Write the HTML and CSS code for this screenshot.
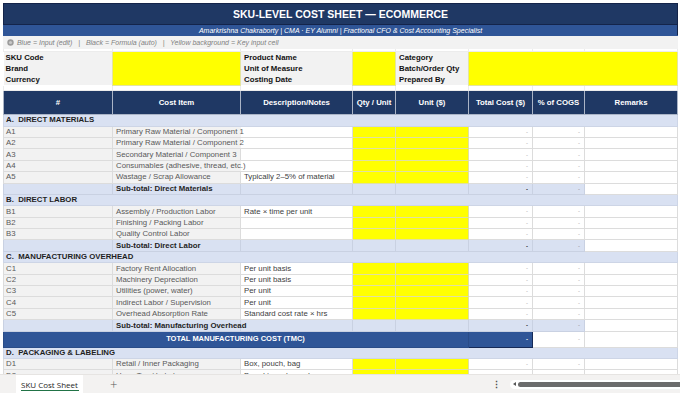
FILE: index.html
```html
<!DOCTYPE html>
<html>
    <head>
        <meta charset="UTF-8">
        <title>SKU Cost Sheet</title>
        <meta name="viewport" content="width=device-width, initial-scale=1.0">
        <link rel="stylesheet" href="styles.css">
    </head>
    <body>
        <main class="sheet">
            <table class="grid">
                <colgroup>
                    <col class="c-num">
                    <col class="c-item">
                    <col class="c-desc">
                    <col class="c-qty">
                    <col class="c-unit">
                    <col class="c-total">
                    <col class="c-pct">
                    <col class="c-rem">
                </colgroup>
                <tr class="title"><td colspan="8">SKU-LEVEL COST SHEET — ECOMMERCE</td></tr>
                <tr class="subtitle"><td colspan="8">Amarkrishna Chakraborty | CMA · EY Alumni | Fractional CFO &amp; Cost Accounting Specialist</td></tr>
                <tr class="legend">
                    <td colspan="8">
                        <svg class="dot" width="7" height="7" viewBox="0 0 7 7"><circle cx="3.5" cy="3.5" r="3.2" fill="#9b9b9b"/><circle cx="3.5" cy="3.5" r="1.6" fill="#c8c8c8"/></svg>
                        Blue = Input (edit) &nbsp; | &nbsp; Black = Formula (auto) &nbsp; | &nbsp; Yellow background = Key input cell
                    </td>
                </tr>
                <tr class="gap small"><td></td><td></td><td></td><td></td><td></td><td></td><td></td><td></td></tr>
                <tr class="info">
                    <td class="label">SKU Code</td>
                    <td class="key" rowspan="3"></td>
                    <td class="label">Product Name</td>
                    <td class="key" rowspan="3"></td>
                    <td class="label">Category</td>
                    <td class="key" rowspan="3" colspan="3"></td>
                </tr>
                <tr class="info">
                    <td class="label">Brand</td>
                    <td class="label">Unit of Measure</td>
                    <td class="label">Batch/Order Qty</td>
                </tr>
                <tr class="info">
                    <td class="label">Currency</td>
                    <td class="label">Costing Date</td>
                    <td class="label">Prepared By</td>
                </tr>
                <tr class="gap"><td></td><td></td><td></td><td></td><td></td><td></td><td></td><td></td></tr>
                <tr class="head">
                    <td>#</td>
                    <td>Cost Item</td>
                    <td>Description/Notes</td>
                    <td>Qty / Unit</td>
                    <td>Unit ($)</td>
                    <td>Total Cost ($)</td>
                    <td>% of COGS</td>
                    <td>Remarks</td>
                </tr>

                <tr class="section"><td colspan="8">A.&nbsp; DIRECT MATERIALS</td></tr>
                <tr class="row"><td class="code">A1</td><td class="item spill">Primary Raw Material / Component 1</td><td class="desc"></td><td class="key"></td><td class="key"></td><td class="num">-</td><td class="num">-</td><td></td></tr>
                <tr class="row"><td class="code">A2</td><td class="item spill">Primary Raw Material / Component 2</td><td class="desc"></td><td class="key"></td><td class="key"></td><td class="num">-</td><td class="num">-</td><td></td></tr>
                <tr class="row"><td class="code">A3</td><td class="item">Secondary Material / Component 3</td><td class="desc"></td><td class="key"></td><td class="key"></td><td class="num">-</td><td class="num">-</td><td></td></tr>
                <tr class="row"><td class="code">A4</td><td class="item spill">Consumables (adhesive, thread, etc.)</td><td class="desc"></td><td class="key"></td><td class="key"></td><td class="num">-</td><td class="num">-</td><td></td></tr>
                <tr class="row"><td class="code">A5</td><td class="item">Wastage / Scrap Allowance</td><td class="desc">Typically 2–5% of material</td><td class="key"></td><td class="key"></td><td class="num">-</td><td class="num">-</td><td></td></tr>
                <tr class="subtotal"><td></td><td>Sub-total: Direct Materials</td><td></td><td></td><td></td><td class="num strong">-</td><td class="num">-</td><td class="blank"></td></tr>

                <tr class="section"><td colspan="8">B.&nbsp; DIRECT LABOR</td></tr>
                <tr class="row"><td class="code">B1</td><td class="item">Assembly / Production Labor</td><td class="desc">Rate × time per unit</td><td class="key"></td><td class="key"></td><td class="num">-</td><td class="num">-</td><td></td></tr>
                <tr class="row"><td class="code">B2</td><td class="item">Finishing / Packing Labor</td><td class="desc"></td><td class="key"></td><td class="key"></td><td class="num">-</td><td class="num">-</td><td></td></tr>
                <tr class="row"><td class="code">B3</td><td class="item">Quality Control Labor</td><td class="desc"></td><td class="key"></td><td class="key"></td><td class="num">-</td><td class="num">-</td><td></td></tr>
                <tr class="subtotal"><td></td><td>Sub-total: Direct Labor</td><td></td><td></td><td></td><td class="num strong">-</td><td class="num">-</td><td class="blank"></td></tr>

                <tr class="section"><td colspan="8">C.&nbsp; MANUFACTURING OVERHEAD</td></tr>
                <tr class="row"><td class="code">C1</td><td class="item">Factory Rent Allocation</td><td class="desc">Per unit basis</td><td class="key"></td><td class="key"></td><td class="num">-</td><td class="num">-</td><td></td></tr>
                <tr class="row"><td class="code">C2</td><td class="item">Machinery Depreciation</td><td class="desc">Per unit basis</td><td class="key"></td><td class="key"></td><td class="num">-</td><td class="num">-</td><td></td></tr>
                <tr class="row"><td class="code">C3</td><td class="item">Utilities (power, water)</td><td class="desc">Per unit</td><td class="key"></td><td class="key"></td><td class="num">-</td><td class="num">-</td><td></td></tr>
                <tr class="row"><td class="code">C4</td><td class="item">Indirect Labor / Supervision</td><td class="desc">Per unit</td><td class="key"></td><td class="key"></td><td class="num">-</td><td class="num">-</td><td></td></tr>
                <tr class="row"><td class="code">C5</td><td class="item">Overhead Absorption Rate</td><td class="desc">Standard cost rate × hrs</td><td class="key"></td><td class="key"></td><td class="num">-</td><td class="num">-</td><td></td></tr>
                <tr class="subtotal"><td></td><td class="spill">Sub-total: Manufacturing Overhead</td><td></td><td></td><td></td><td class="num strong">-</td><td class="num">-</td><td class="blank"></td></tr>

                <tr class="total"><td colspan="5">TOTAL MANUFACTURING COST (TMC)</td><td class="num picked">-</td><td class="num">-</td><td></td></tr>

                <tr class="section"><td colspan="8">D.&nbsp; PACKAGING &amp; LABELING</td></tr>
                <tr class="row"><td class="code">D1</td><td class="item">Retail / Inner Packaging</td><td class="desc">Box, pouch, bag</td><td class="key"></td><td class="key"></td><td class="num">-</td><td class="num">-</td><td></td></tr>
                <tr class="row"><td class="code">D2</td><td class="item">Hang Tag / Label</td><td class="desc">Brand tags, barcode</td><td class="key"></td><td class="key"></td><td class="num">-</td><td class="num">-</td><td></td></tr>
            </table>
        </main>

        <footer class="tabs">
            <div class="tab">SKU Cost Sheet</div>
            <div class="add">+</div>
            <div class="spacer"></div>
            <div class="more">⋮</div>
            <div class="scroll">
                <span class="arrow"></span>
                <span class="thumb"></span>
            </div>
        </footer>
    </body>
</html>
```

FILE: styles.css
```css
body
{
    margin: 0;
    padding: 0;
    height: 393px;
    display: flex;
    flex-direction: column;
    overflow: hidden;
    background: #ffffff;
    font-family: "Liberation Sans", Arial, sans-serif;
}

/* Sheet area */
.sheet
{
    flex: 1;
    overflow: hidden;
    padding: 3px 0 0 3px;
}
.grid
{
    width: 674px;
    table-layout: fixed;
    border-collapse: collapse;
    font-size: 7.8px;
    color: #595959;
}
.grid .c-num { width: 109px }
.grid .c-item { width: 128px }
.grid .c-desc { width: 112px }
.grid .c-qty { width: 43px }
.grid .c-unit { width: 73px }
.grid .c-total { width: 64px }
.grid .c-pct { width: 52px }
.grid .c-rem { width: 93px }

.grid td
{
    box-sizing: border-box;
    padding: 0 3px;
    border: 1px solid #dcdcdc;
    white-space: nowrap;
    overflow: visible;
    line-height: 1;
    vertical-align: middle;
}
.grid td:first-child { padding-left: 2px }
.grid td.spill { border-right-color: transparent }

/* Banner rows */
.grid .title td
{
    height: 21px;
    padding: 0;
    background: #1f3864;
    border: 1px solid #14244a;
    color: #ffffff;
    font-size: 10.5px;
    font-weight: bold;
    text-align: center;
}
.grid .subtitle td
{
    height: 11px;
    padding: 0;
    background: #2f5597;
    border: 1px solid #2f5597;
    border-right-color: #14244a;
    color: #ffffff;
    font-size: 7px;
    font-style: italic;
    text-align: center;
}
.grid .legend td
{
    height: 13px;
    padding-left: 3px;
    background: #f2f2f2;
    border-color: #f2f2f2;
    color: #7f7f7f;
    font-size: 7px;
    font-style: italic;
}
.grid .legend .dot { vertical-align: -1px; margin-right: 1px }
.grid .gap td { height: 5px; border-color: #ececec; border-top-color: #ffffff }
.grid .gap.small td { height: 3px }

/* Info block */
.grid .info td { height: 11.4px; border: none }
.grid .info .label
{
    background: #f2f2f2;
    color: #111111;
    font-weight: bold;
}
.grid .key { background: #ffff00 }
.grid .info .key { border: 1px solid #e4e4a0 }

/* Column headings */
.grid .head td
{
    height: 24px;
    padding: 0;
    background: #1f3864;
    border: 1px solid #aab4c6;
    color: #ffffff;
    font-weight: bold;
    text-align: center;
}

/* Body rows */
.grid .section td
{
    height: 11.4px;
    background: #d9e1f2;
    border-color: #cdd5e6;
    color: #1f1f1f;
    font-weight: bold;
}
.grid .row td { height: 11.4px }
.grid .row .code,
.grid .row .item { background: #f2f2f2 }
.grid .row .desc { color: #404040 }
.grid .row .key { border-color: #e0e0a0 }
.grid .num
{
    text-align: right;
    padding-right: 4px;
    font-size: 6px;
    color: #a6a6a6;
}
.grid .subtotal td
{
    height: 11.4px;
    background: #d9e1f2;
    border-color: #c9d1e2;
    color: #1f1f1f;
    font-weight: bold;
}
.grid .subtotal .num { color: #8a8a8a; font-weight: normal }
.grid .subtotal .strong { color: #222222; font-weight: bold }
.grid .subtotal .blank { background: #ffffff; border-color: #dcdcdc }

.grid .total td { height: 16px }
.grid .total td:first-child
{
    background: #2f5597;
    border-color: #2a4c88;
    color: #ffffff;
    font-size: 7.5px;
    font-weight: bold;
    text-align: center;
}
.grid .total .picked
{
    background: #2f5597;
    border: 1px solid #162a57;
    color: #ffffff;
    font-weight: bold;
}

/* Sheet tabs */
.tabs
{
    height: 18px;
    flex-shrink: 0;
    display: flex;
    align-items: center;
    background: #f3f2f1;
    border-top: 1px solid #e6e4e2;
    font-family: "Open Sans", "Noto Sans", sans-serif;
}
.tabs .tab
{
    margin-left: 16px;
    height: 18px;
    padding: 0 5px;
    display: flex;
    align-items: center;
    background: #ffffff;
    color: #252525;
    font-size: 8px;
    position: relative;
}
.tabs .tab::after
{
    content: "";
    position: absolute;
    left: 5px;
    right: 4px;
    bottom: 2px;
    height: 1px;
    background: #217346;
}
.tabs .add
{
    margin-left: 27px;
    color: #5a5a5a;
    font-size: 13px;
    font-weight: 300;
    line-height: 1;
}
.tabs .spacer { flex: 1 }
.tabs .more
{
    margin-right: 9px;
    color: #4a4a4a;
    font-size: 9px;
    font-weight: bold;
}
.tabs .scroll
{
    width: 167px;
    height: 9px;
    display: flex;
    align-items: center;
    gap: 2px;
    padding-left: 3px;
    background: #ffffff;
    border-radius: 5px 0 0 5px;
}
.tabs .arrow
{
    width: 0;
    height: 0;
    border-top: 2.5px solid transparent;
    border-bottom: 2.5px solid transparent;
    border-right: 3px solid #555555;
}
.tabs .thumb
{
    flex: 1;
    height: 5px;
    background: #6b6b6b;
    border-radius: 3px 0 0 3px;
}
```
